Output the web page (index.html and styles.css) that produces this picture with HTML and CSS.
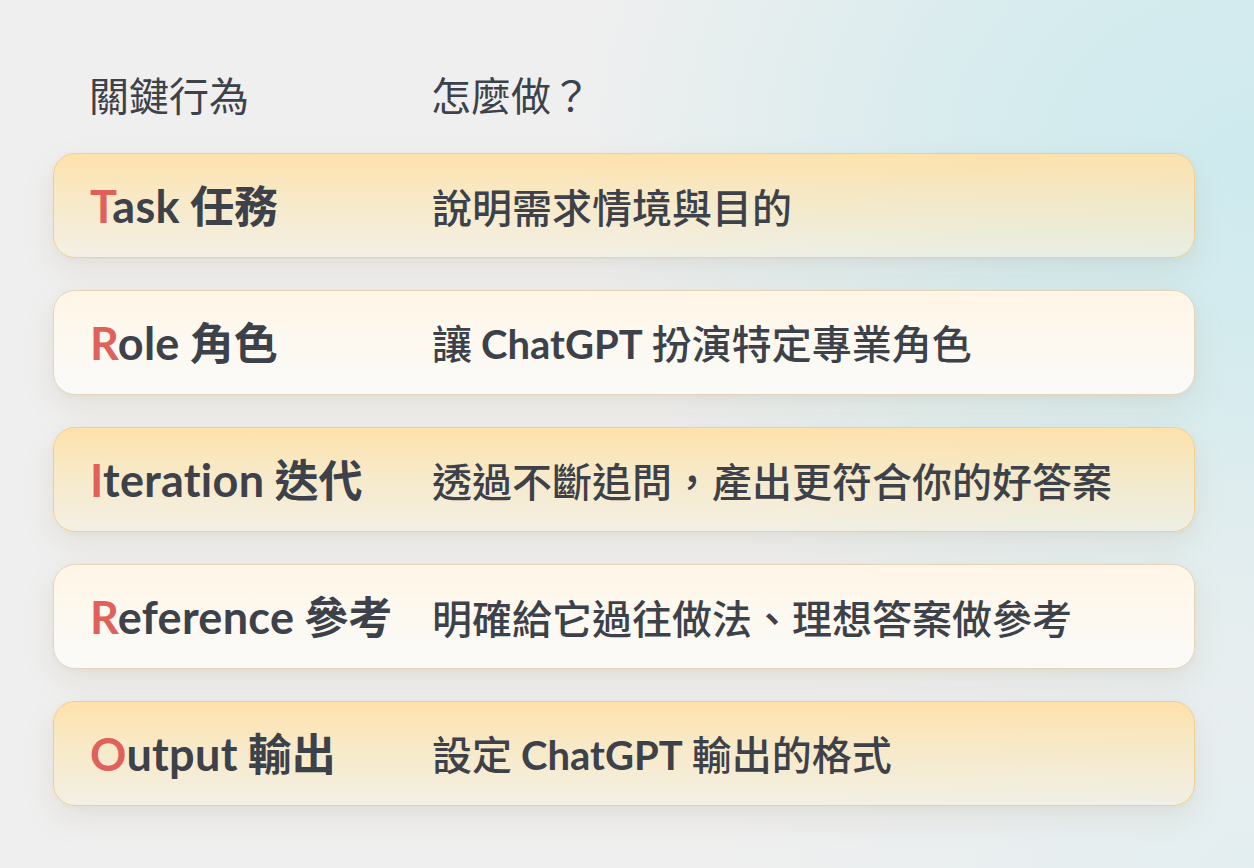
FILE: index.html
```html
<!DOCTYPE html>
<html lang="zh-Hant">
<head>
<meta charset="utf-8">
<title>關鍵行為</title>
<link rel="stylesheet" href="styles.css">
</head>
<body>
<main class="page">
  <div class="row head">
    <div class="col-key">關鍵行為</div>
    <div class="col-how">怎麼做？</div>
  </div>
  <div class="row card warm">
    <div class="col-key title"><span class="lat"><span class="hl">T</span>ask</span> 任務</div>
    <div class="col-how desc">說明需求情境與目的</div>
  </div>
  <div class="row card light">
    <div class="col-key title"><span class="lat"><span class="hl">R</span>ole</span> 角色</div>
    <div class="col-how desc">讓 <span class="lat">ChatGPT</span> 扮演特定專業角色</div>
  </div>
  <div class="row card warm">
    <div class="col-key title"><span class="lat"><span class="hl">I</span>teration</span> 迭代</div>
    <div class="col-how desc">透過不斷追問，產出更符合你的好答案</div>
  </div>
  <div class="row card light">
    <div class="col-key title"><span class="lat"><span class="hl">R</span>eference</span> 參考</div>
    <div class="col-how desc">明確給它過往做法、理想答案做參考</div>
  </div>
  <div class="row card warm">
    <div class="col-key title"><span class="lat"><span class="hl">O</span>utput</span> 輸出</div>
    <div class="col-how desc">設定 <span class="lat">ChatGPT</span> 輸出的格式</div>
  </div>
</main>
</body>
</html>
```

FILE: styles.css
```css
html, body {
  margin: 0;
  padding: 0;
}

body {
  width: 1254px;
  height: 868px;
  overflow: hidden;
  background:
    radial-gradient(ellipse 680px 560px at 1254px 160px, rgba(206, 234, 238, 1) 0%, rgba(210, 235, 238, 0.85) 40%, rgba(225, 238, 240, 0) 100%),
    radial-gradient(ellipse 520px 360px at 1254px 868px, rgba(226, 238, 241, 0.9) 0%, rgba(234, 240, 241, 0) 100%),
    #efefef;
  font-family: "Noto Sans CJK TC", "Noto Sans", sans-serif;
  color: #3d4149;
}

.page {
  display: flex;
  flex-direction: column;
  gap: 32px;
  padding: 70px 0 0 53px;
  width: 1142px;
}

.row {
  display: flex;
  align-items: center;
  padding-left: 36px;
}

.col-key {
  width: 342px;
  flex: none;
  white-space: nowrap;
}

.col-how {
  white-space: nowrap;
}

.head {
  height: 48px;
  margin-bottom: 3px;
  font-size: 40px;
  line-height: 48px;
  font-weight: 400;
}

.card {
  box-sizing: border-box;
  height: 105px;
  border-radius: 22px;
  box-shadow: 0 12px 30px rgba(160, 140, 100, 0.14), 0 2px 6px rgba(160, 140, 100, 0.06);
}

.warm {
  border: 1.5px solid #f2cf8c;
  background: linear-gradient(180deg, rgba(255, 225, 168, 0.95) 0%, rgba(250, 232, 190, 0.78) 45%, rgba(246, 240, 222, 0.6) 100%);
}

.light {
  border: 1.5px solid #e4d4bc;
  background: linear-gradient(180deg, #fff5e5 0%, #fdf9f1 50%, #fafaf8 100%);
}

.title {
  font-size: 44px;
  font-weight: 700;
  line-height: 1.2;
}

.title .lat {
  font-family: "Lato", "Noto Sans", sans-serif;
  font-weight: 700;
  font-size: 45px;
  letter-spacing: 0.3px;
}

.hl {
  color: #e0605a;
}

.desc {
  font-size: 40px;
  font-weight: 500;
  line-height: 1.2;
}

.desc .lat {
  font-family: "Lato", "Noto Sans", sans-serif;
  font-weight: 700;
}
```
